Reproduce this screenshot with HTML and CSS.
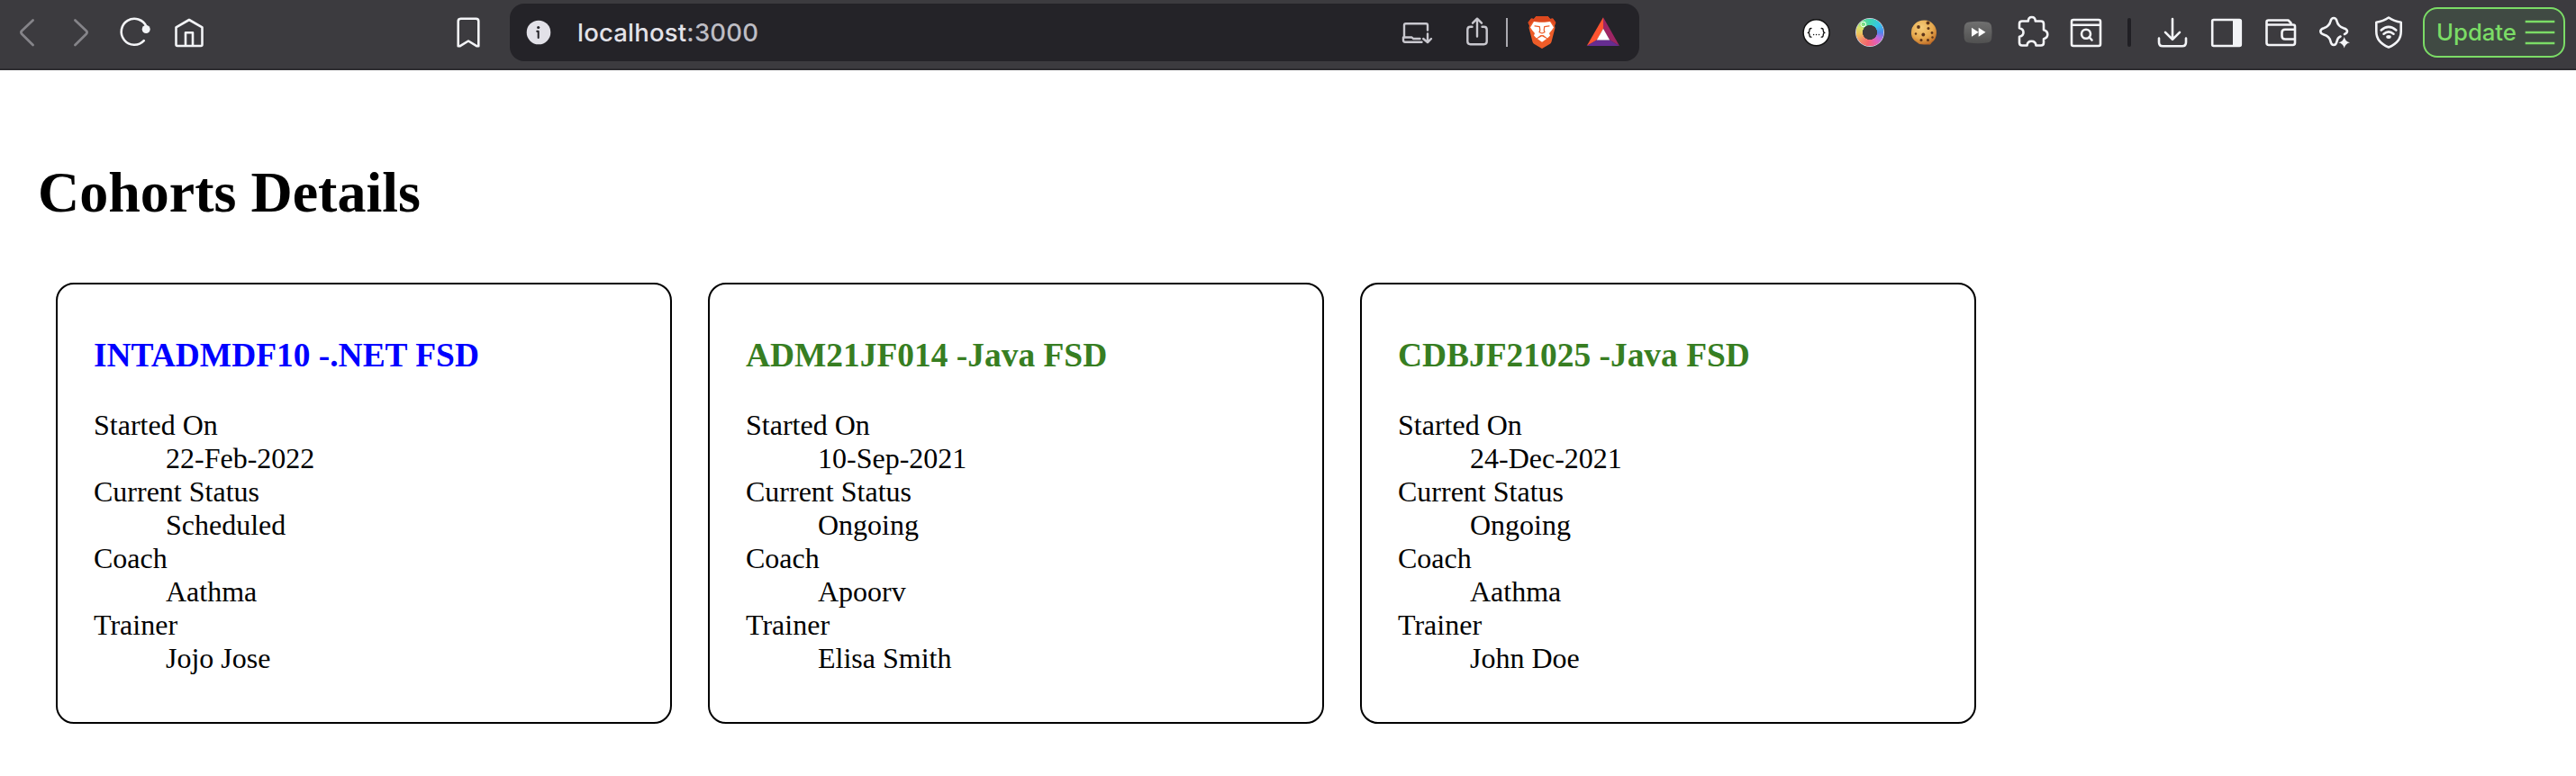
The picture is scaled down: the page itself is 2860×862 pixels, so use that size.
FILE: index.html
```html
<!DOCTYPE html>
<html lang="en">
<head>
<meta charset="utf-8">
<title>Cohorts Details</title>
<link rel="stylesheet" href="styles.css">
</head>
<body>
<header class="toolbar">
  <nav class="group nav">
    <svg class="icon dim" viewBox="0 0 40 40"><path d="M26.6 6.4 14.2 18.2Q12.600 20 14.200 21.800L26.600 34"/></svg>
    <svg class="icon dim" viewBox="0 0 40 40"><path d="M13.400 6.400 25.800 18.200Q27.400 20 25.800 21.800L13.400 34"/></svg>
    <svg class="icon" viewBox="0 0 40 40"><path d="M29.800 29.200A14.500 14.500 0 1 1 32.500 13.500"/><circle class="solid" cx="32.200" cy="16.500" r="4.500"/></svg>
    <svg class="icon" viewBox="0 0 40 40"><path d="M5.500 14.300 20 6 34.500 14.300V33.500Q34.500 35 33 35H7Q5.500 35 5.500 33.500ZM16 35V20.200H24V35"/></svg>
  </nav>
  <svg class="icon bookmark" viewBox="0 0 40 40"><path d="M11.500 4.800H28.500Q31.300 4.800 31.300 7.600V35.200H29.200L20 29.500 10.800 35.200H8.700V7.600Q8.700 4.800 11.500 4.800Z"/></svg>
  <div class="address">
    <svg class="icon info" viewBox="0 0 40 40"><circle cx="20" cy="20" r="13.300" fill="#e2e1e8" stroke="none"/><circle cx="19.700" cy="14.500" r="1.600" fill="#242328" stroke="none"/><path d="M18.200 18.800H19.700V26" stroke="#242328" stroke-width="2"/></svg>
    <span class="url">localhost<span class="port">:3000</span></span>
    <svg class="icon soft" viewBox="0 0 40 40"><path d="M6 24.500V12Q6 10.300 7.700 10.300H30.300Q32 10.300 32 12V17.500M25.500 30.700H7Q5 30.700 5 28.700V25.500H14.500L16 27H23.500M32 21.500V31M27.200 27 32 31.200 36 27"/></svg>
    <svg class="icon soft share" viewBox="0 0 40 40"><path d="M14.500 13.800H12.500Q9.300 13.800 9.300 17V30Q9.300 33.200 12.500 33.200H27.500Q30.700 33.200 30.700 30V17Q30.700 13.800 27.500 13.800H25.500M20 24.500V5M15 9.700 20 4.700 25 9.700"/></svg>
    <span class="rule"></span>
    <svg class="icon brave" viewBox="0 0 40 40"><g stroke="none"><path fill="#ed5c28" d="M13.500 2H26.500L29 5 32 4.500 35.300 9 34 12.500 34.500 15 30.500 30.500Q30 32 28.500 33L20 38 11.500 33Q10 32 9.500 30.500L5.500 15 6 12.500 4.500 9 8 4.500 11 5Z"/><path fill="#dc481e" d="M13.500 2H26.500L29 5 32 4.500 35.300 9 34 12 30 7.500 20 8.500 10 7.500 6 12 4.500 9 8 4.500 11 5Z"/><path fill="#fff" d="M11 8 17 8.800H23L29 8 33 14.500 30.500 18 28 21 29 23.500 26 26.500 21.500 23H18.500L14 26.500 11 23.500 12 21 9.500 18 7 14.500Z"/><path fill="#fff" d="M20 24.200 25.200 27 20 30.800 14.800 27Z"/></g><path stroke="#ed5c28" stroke-width="1.200" d="M12 12.800 17.300 13.700 17.800 17.500 17 19.700 20 21 23 19.700 22.200 17.500 22.700 13.700 28 12.800"/></svg>
    <svg class="icon bat" viewBox="0 0 40 40"><g stroke="none"><path fill="#ff5430" d="M20 3.300 1.700 35 13 28.500 20 15.700Z"/><path fill="#9e2564" d="M20 3.300 38 35 27 28.500 20 15.700Z"/><path fill="#662d91" d="M1.700 35H38L27 28.300H13Z"/><path fill="#fff" d="M20 15.700 27.200 28.500H12.800Z"/></g></svg>
  </div>
  <div class="group extensions">
    <svg class="icon" viewBox="0 0 40 40"><circle cx="20.600" cy="20.300" r="14.500" fill="#fff" stroke="#111" stroke-width="1.500"/><path stroke="#111" stroke-width="1.300" d="M15 15.500Q13 15.500 13 17.300 13 20.300 11.200 20.300 13 20.300 13 23.300 13 25.200 15 25.200M26.200 15.500Q28.200 15.500 28.200 17.300 28.200 20.300 30 20.300 28.200 20.300 28.200 23.300 28.200 25.200 26.200 25.200"/><path stroke="#111" stroke-width="1.500" stroke-dasharray="0 3" d="M17.600 22.500H24"/></svg>
    <span class="wheel"></span>
    <svg class="icon" viewBox="0 0 40 40"><defs><radialGradient id="dough" cx=".4" cy=".3" r=".75"><stop offset="0" stop-color="#f6cd7b"/><stop offset=".6" stop-color="#e6a94e"/><stop offset="1" stop-color="#bd6824"/></radialGradient></defs><path fill="url(#dough)" stroke="none" d="M20 6.500Q26 6 30 10.500 34.500 15 34 21 33.500 28 29 31L27 33.500 20 33.500 15 33 9.500 29Q5.500 25 6 20 6 14 10.500 10 14 6.500 20 6.500Z"/><g fill="#5c351b" stroke="none"><circle cx="14" cy="14" r="1.900"/><circle cx="24.500" cy="9.500" r="2"/><circle cx="25" cy="15.500" r="1.500"/><circle cx="19.300" cy="22.500" r="1.900"/><circle cx="11" cy="21.500" r="1.200"/><circle cx="29" cy="20.500" r="1.400"/><circle cx="17" cy="28.500" r="1.500"/><circle cx="24.500" cy="28.500" r="1.500"/><circle cx="29.500" cy="25.500" r="1.200"/></g></svg>
    <svg class="icon" viewBox="0 0 40 40"><defs><linearGradient id="key" x2="0" y2="1"><stop offset="0" stop-color="#707070"/><stop offset="1" stop-color="#505050"/></linearGradient></defs><path fill="url(#key)" stroke="none" d="M10 8.500Q20 7 30 8.500 34.700 9 35.200 14 36 20 35.200 27 34.500 31 30 31.600 20 33 10 31.600 5.500 31 4.800 27 4 20 4.800 14 5.300 9 10 8.500Z"/><path fill="#fff" stroke="none" d="M13 14.800 20.700 19.800 13 24.800ZM20.700 14.800 28.500 19.800 20.700 24.800Z"/></svg>
    <svg class="icon" viewBox="0 0 40 40"><path d="M9 7.500H15.800Q16 3 19.800 3 23.600 3 23.800 7.500H30Q33 7.500 33 10.500V17.300Q37.300 18.500 37.300 22.300 37.300 26 33 27.200V31.500Q33 34.500 30 34.500H24.500Q24 29.700 19.500 29.700 15 29.700 14.500 34.500H9Q6 34.500 6 31.500V24.800Q10.500 24 10.500 20 10.500 16 6 15.200V10.500Q6 7.500 9 7.500Z"/></svg>
    <svg class="icon" viewBox="0 0 40 40"><path d="M6 6H34Q36 6 36 8V33Q36 35 34 35H6Q4 35 4 33V8Q4 6 6 6ZM4 11.800H36"/><circle cx="20" cy="21.700" r="5"/><path d="M23.600 25.300 26.500 28.500"/></svg>
  </div>
  <span class="separator"></span>
  <div class="group actions">
    <svg class="icon" viewBox="0 0 40 40"><path d="M20 5V27.500M12 19.800 20 27.800 28 19.800M5 26.500V31Q5 35.200 9.200 35.200H30.800Q35 35.200 35 31V26.500"/></svg>
    <svg class="icon" viewBox="0 0 40 40"><rect x="4.200" y="6" width="31.600" height="29" rx="1.500"/><path class="solid" d="M27 5.500H34.500Q36.500 5.500 36.500 7.500V33.500Q36.500 35.500 34.500 35.500H27Z"/></svg>
    <svg class="icon" viewBox="0 0 40 40"><path d="M31.500 11.500V9.500L28.500 6.500H6.500Q4.500 6.500 4.500 8.500V31.500Q4.500 34 7 34H33.500Q36 34 36 31.500V13.500Q36 11.500 34 11.500H4.500M36 16.800H25Q21.500 16.800 21.500 20V24Q21.500 27.500 25 27.500H36"/></svg>
    <svg class="icon" viewBox="0 0 40 40"><path d="M26.500 24.500Q23.400 25.700 22.500 30 21.700 34 19 34 16.300 34 15.500 30 14.500 24.500 8 22.500 4.300 21.300 4.300 18.800 4.300 16.500 8 15.300 14.300 13 15.500 7.500 16.300 4 19 4 21.700 4 22.500 7.500 23.700 13 30 15.300 34 16.500 34 18.800 34 20.800 31 22"/><path class="solid" d="M30.700 25Q31.800 30.200 37 31.300 31.800 32.400 30.700 37.600 29.600 32.400 24.400 31.300 29.600 30.200 30.700 25Z"/></svg>
    <svg class="icon" viewBox="0 0 40 40"><path d="M20 3.500Q26 7.700 33.700 8.700V19Q33.700 31 20 36.500 6.300 31 6.300 19V8.700Q14 7.700 20 3.500ZM11.700 17.500Q20 10.300 28.300 17.500M14.500 21.700Q20 17 25.500 21.700"/><ellipse class="solid" cx="20" cy="25" rx="2.800" ry="1.900"/></svg>
  </div>
  <button class="update"><span>Update</span><svg class="menu" viewBox="0 0 34 28"><path d="M0.700 2H33.300M0.700 14H33.300M0.700 26H33.300"/></svg></button>
</header>
<main class="page">
  <h1 class="title">Cohorts Details</h1>
  <section class="cards">
    <article class="card">
      <h3 class="cohort scheduled">INTADMDF10 -.NET FSD</h3>
      <dl class="facts"><dt>Started On</dt><dd>22-Feb-2022</dd><dt>Current Status</dt><dd>Scheduled</dd><dt>Coach</dt><dd>Aathma</dd><dt>Trainer</dt><dd>Jojo Jose</dd></dl>
    </article>
    <article class="card">
      <h3 class="cohort ongoing">ADM21JF014 -Java FSD</h3>
      <dl class="facts"><dt>Started On</dt><dd>10-Sep-2021</dd><dt>Current Status</dt><dd>Ongoing</dd><dt>Coach</dt><dd>Apoorv</dd><dt>Trainer</dt><dd>Elisa Smith</dd></dl>
    </article>
    <article class="card">
      <h3 class="cohort ongoing">CDBJF21025 -Java FSD</h3>
      <dl class="facts"><dt>Started On</dt><dd>24-Dec-2021</dd><dt>Current Status</dt><dd>Ongoing</dd><dt>Coach</dt><dd>Aathma</dd><dt>Trainer</dt><dd>John Doe</dd></dl>
    </article>
  </section>
</main>
</body>
</html>
```

FILE: styles.css
```css
* { box-sizing: border-box; }

body {
  margin: 0;
  background: #fff;
  color: #000;
  font: 32px/37px "Liberation Serif", "Times New Roman", serif;
}

.toolbar {
  display: flex;
  align-items: center;
  height: 78px;
  padding: 0 12px 4px 10px;
  background: #3c3b3f;
  border-bottom: 2px solid #2e2d31;
  font-family: Inter, "Liberation Sans", sans-serif;
}

.group { display: flex; gap: 20px; }

.icon {
  flex: none;
  display: block;
  width: 40px;
  height: 40px;
  fill: none;
  stroke: #f3f4f7;
  stroke-width: 2.6;
  stroke-linecap: round;
  stroke-linejoin: round;
}
.icon .solid { fill: #f3f4f7; stroke: none; }
.dim { stroke: #858489; stroke-width: 2.7; }
.soft { stroke: #c8c7ce; stroke-width: 2.4; }

.bookmark { margin-left: 270px; }

.address {
  display: flex;
  align-items: center;
  width: 1254px;
  height: 64px;
  margin-left: 26px;
  padding: 0 20px 0 12px;
  border-radius: 16px;
  background: #242328;
}
.url {
  flex: 1;
  margin-left: 23px;
  font-size: 27.5px;
  line-height: 40px;
  letter-spacing: 0.2px;
  font-weight: 450;
  color: #e3e2e8;
}
.port { color: #bebdc4; }
.share { margin-left: 27px; }
.rule {
  width: 2px;
  height: 32px;
  margin-left: 12px;
  background: #aaa9b0;
}
.brave { margin-left: 18px; }
.bat { margin-left: 28px; }

.extensions { margin-left: 176px; }
.wheel {
  width: 32px;
  height: 32px;
  margin: 4px;
  border-radius: 50%;
  background:
    radial-gradient(circle at 8.700px 7px, transparent 2px, #e9ffe8 2.400px 3px, transparent 3.400px),
    radial-gradient(circle, #3c3b3f 7.800px, transparent 8.300px 15px, #ccd 15.500px),
    conic-gradient(#3fd5b0, #35c7e8 50deg, #4f86ec 90deg, #b96ae0 120deg, #e75fae 150deg, #f4646e 190deg, #f2806b 220deg, #f0c05d 260deg, #d5e36b 295deg, #62dc90 330deg, #3fd5b0);
}

.separator {
  width: 4px;
  height: 32px;
  margin: 0 26px;
  border-radius: 2px;
  background: #201f24;
}

.update {
  display: flex;
  align-items: center;
  justify-content: space-between;
  width: 158px;
  height: 56px;
  margin-left: 18px;
  padding: 0 9px 0 13px;
  border: 2px solid #7bdc66;
  border-radius: 16px;
  background: #404a43;
  color: #7bdc66;
  font: 450 25.7px/40px Inter, "Liberation Sans", sans-serif;
}
.menu {
  width: 34px;
  height: 28px;
  fill: none;
  stroke: #7bdc66;
  stroke-width: 2.4;
}

.page { padding: 99px 42px 0; }

.title {
  margin: 0;
  font-size: 64px;
  line-height: 74px;
}

.cards {
  display: flex;
  gap: 40px;
  margin: 63px 20px 0;
}

.card {
  width: 684px;
  height: 490px;
  padding: 20px 40px;
  border: 2px solid #000;
  border-radius: 20px;
}

.cohort {
  margin: 37px 0 38px;
  font-size: 37.44px;
  line-height: 43px;
}
.scheduled { color: #0000ff; }
.ongoing { color: #377e22; }

.facts { margin: 0; }
.facts dd { margin-left: 80px; }
```
